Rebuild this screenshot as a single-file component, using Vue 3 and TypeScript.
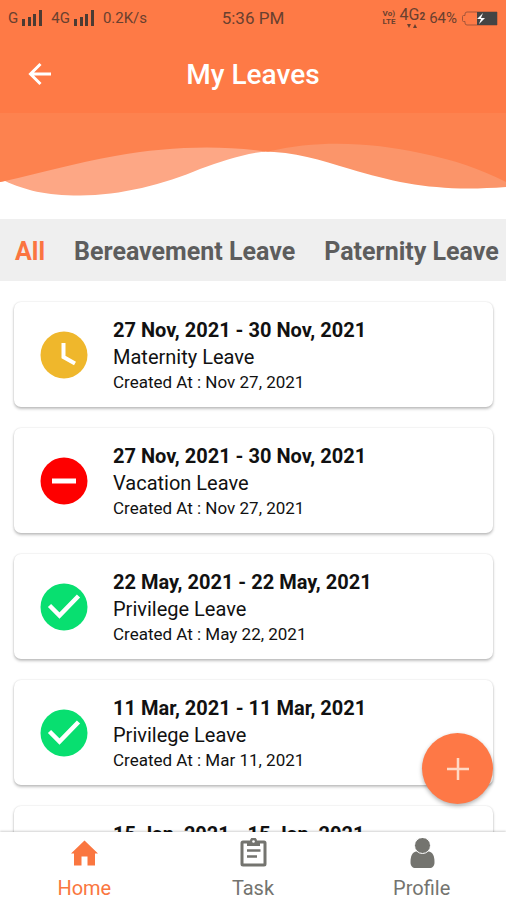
<script setup lang="ts">
import { ref } from 'vue'

type Status = 'pending' | 'rejected' | 'approved'

interface Leave {
  id: number
  range: string
  kind: string
  created: string
  status: Status
}

const filters = ['All', 'Bereavement Leave', 'Paternity Leave']
const activeFilter = ref('All')

const leaves: Leave[] = [
  { id: 1, range: '27 Nov, 2021 - 30 Nov, 2021', kind: 'Maternity Leave', created: 'Nov 27, 2021', status: 'pending' },
  { id: 2, range: '27 Nov, 2021 - 30 Nov, 2021', kind: 'Vacation Leave', created: 'Nov 27, 2021', status: 'rejected' },
  { id: 3, range: '22 May, 2021 - 22 May, 2021', kind: 'Privilege Leave', created: 'May 22, 2021', status: 'approved' },
  { id: 4, range: '11 Mar, 2021 - 11 Mar, 2021', kind: 'Privilege Leave', created: 'Mar 11, 2021', status: 'approved' },
  { id: 5, range: '15 Jan, 2021 - 15 Jan, 2021', kind: 'Privilege Leave', created: 'Jan 15, 2021', status: 'approved' },
]
</script>

<template>
  <div class="screen">
    <header class="header">
      <div class="status">
        <div class="status-group status-left">
          <span class="signal">
            <span class="net">G</span>
            <svg class="bars" viewBox="0 0 21 17" aria-hidden="true">
              <path d="M0 9h3v7H0zM6 7h3v9H6zM11 4h3v12h-3zM17 0h3v16h-3z" />
            </svg>
          </span>
          <span class="signal">
            <span class="net">4G</span>
            <svg class="bars" viewBox="0 0 21 17" aria-hidden="true">
              <path d="M0 9h3v7H0zM6 7h3v9H6zM11 4h3v12h-3zM17 0h3v16h-3z" />
            </svg>
          </span>
          <span class="net">0.2K/s</span>
        </div>
        <time class="clock">5:36 PM</time>
        <div class="status-group status-right">
          <span class="volte"><span>Vo)</span><span>LTE</span></span>
          <span class="mobile">
            <span class="mobile-label">4G<small>2</small></span>
            <svg class="traffic" viewBox="0 0 12 4" aria-hidden="true">
              <path d="M1 0h4L3 4zM7 4h4L9 0z" />
            </svg>
          </span>
          <span class="net">64%</span>
          <svg class="battery" viewBox="0 0 37 15" aria-hidden="true">
            <path d="M6 1h30v13H6q-2 0-2-2v-1.500H2.500q-1 0-1-1v-4q0-1 1-1H4V3q0-2 2-2z" fill="none" stroke="#a5563a" />
            <path d="M16 1h20v13H16z" fill="#444" />
            <path d="M22 2l-6 6h4l-2 5 6-6h-4z" fill="#fff" />
          </svg>
        </div>
      </div>
      <div class="titlebar">
        <button class="back" type="button" aria-label="Back">
          <svg viewBox="0 0 26 26" aria-hidden="true">
            <path d="M24 12H4M13.500 2L3.500 12l10 10" fill="none" stroke="#fff" stroke-width="3" />
          </svg>
        </button>
        <h1>My Leaves</h1>
      </div>
    </header>

    <svg class="wave" viewBox="0 0 506 106" preserveAspectRatio="none" aria-hidden="true">
      <path fill="#fda785" d="M0 0H265V38.500C243 41 222 48 200 56C165 71 120 82.500 80 82.500C45 82.500 25 77 5 68L0 69Z" />
      <path fill="#fb956a" d="M255 0H506V74C440 79 400 71 350 56C320 47 295 38.500 262 38.500Z" />
      <path fill="#fd824f" d="M0 0H506V69C480 56 455 47 420 40C375 30 320 26 268 38.500L262 38C215 32 165 34 115 43C75 50 40 60 5 68L0 69Z" />
    </svg>

    <nav class="filters" aria-label="Leave type">
      <button
        v-for="name in filters"
        :key="name"
        type="button"
        class="filter"
        :class="{ active: name === activeFilter }"
        @click="activeFilter = name"
      >{{ name }}</button>
    </nav>

    <main class="list">
      <article v-for="leave in leaves" :key="leave.id" class="card">
        <svg class="badge" viewBox="0 0 48 48" aria-hidden="true">
          <template v-if="leave.status === 'pending'">
            <circle cx="24" cy="24" r="23.500" fill="#efb72c" />
            <path d="M23.500 12v14l11.500 6.500" fill="none" stroke="#fff" stroke-width="4" />
          </template>
          <template v-else-if="leave.status === 'rejected'">
            <circle cx="24" cy="24" r="23.500" fill="#fe0000" />
            <path d="M12 24h24" stroke="#fff" stroke-width="5" />
          </template>
          <template v-else>
            <circle cx="24" cy="24" r="23.500" fill="#08df70" />
            <path d="M9.500 22.500l10 10L38.500 13" fill="none" stroke="#fff" stroke-width="4.500" />
          </template>
        </svg>
        <div class="details">
          <h2>{{ leave.range }}</h2>
          <p class="kind">{{ leave.kind }}</p>
          <p class="created">Created At : {{ leave.created }}</p>
        </div>
      </article>
    </main>

    <button class="add" type="button" aria-label="Add leave">
      <svg viewBox="0 0 22 22" aria-hidden="true">
        <path d="M11 0v22M0 11h22" stroke="#ffd9c5" stroke-width="2.500" />
      </svg>
    </button>

    <nav class="tabs" aria-label="Main">
      <a class="tab current" href="#home" aria-current="page">
        <svg viewBox="0 0 32 32" aria-hidden="true">
          <path d="M16.500 2.500L30 15.500h-3V27.500h-7.500v-9h-6v9H6v-12H3z" fill="currentColor" />
        </svg>
        <span>Home</span>
      </a>
      <a class="tab" href="#task">
        <svg viewBox="0 0 32 32" aria-hidden="true">
          <rect x="5" y="4" width="23" height="23" rx="1" fill="none" stroke="currentColor" stroke-width="3" />
          <path d="M10 3h3a3.500 3.500 0 0 1 7 0h3v5H10z" fill="currentColor" />
          <path d="M10 12.500h13.500M10 18.500h10" stroke="currentColor" stroke-width="2.500" />
          <circle cx="16.500" cy="3.500" r="1.300" fill="#fff" />
        </svg>
        <span>Task</span>
      </a>
      <a class="tab" href="#profile">
        <svg viewBox="0 0 32 32" aria-hidden="true">
          <path d="M10 13.500h13c4 1 5.500 5 5.500 10.500 0 4-2 6-5 6h-14c-3 0-5-2-5-6 0-5.500 1.500-9.500 5.500-10.500z" fill="currentColor" />
          <circle cx="16.500" cy="7.500" r="8" fill="currentColor" stroke="#fff" />
        </svg>
        <span>Profile</span>
      </a>
    </nav>
  </div>
</template>

<style>
html,
body,
#app {
  height: 100%;
}

body {
  margin: 0;
}
</style>

<style scoped>
.screen {
  display: flex;
  flex-direction: column;
  height: 100%;
  position: relative;
  overflow: hidden;
  background: #fff;
  color: #111;
  font-family: Roboto, "Liberation Sans", sans-serif;
}

button {
  border: 0;
  padding: 0;
  background: none;
  font: inherit;
  color: inherit;
  cursor: pointer;
}

h1,
h2,
p {
  margin: 0;
}

svg {
  display: block;
  flex: none;
}

.header {
  flex: none;
  background: #fe7a46;
}

.status {
  display: grid;
  grid-template-columns: 1fr auto 1fr;
  align-items: center;
  height: 36px;
  padding: 0 8px;
  color: #69402f;
}

.status-group {
  display: flex;
  align-items: center;
}

.status-left {
  gap: 8px;
}

.signal {
  display: flex;
  align-items: center;
  gap: 4px;
}

.status-right {
  justify-content: flex-end;
  gap: 4px;
}

.net {
  font-size: 15px;
}

.bars {
  width: 21px;
  height: 17px;
  fill: #4c3b33;
}

.clock {
  font-size: 17px;
}

.volte {
  display: flex;
  flex-direction: column;
  font-size: 8px;
  line-height: 8px;
  font-weight: 700;
}

.mobile {
  display: flex;
  flex-direction: column;
  align-items: center;
}

.mobile-label {
  font-size: 16px;
  line-height: 14px;
}

.mobile-label small {
  font-size: 10px;
  font-weight: 700;
}

.traffic {
  width: 12px;
  height: 4px;
  fill: currentColor;
}

.battery {
  width: 37px;
  height: 15px;
}

.titlebar {
  display: grid;
  grid-template-columns: 48px 1fr 48px;
  align-items: center;
  height: 77px;
  padding: 0 16px;
}

.back {
  display: grid;
  place-items: center;
  height: 48px;
}

.back svg {
  width: 26px;
  height: 26px;
}

h1 {
  color: #fff;
  font-size: 28px;
  font-weight: 500;
  line-height: 32px;
  text-align: center;
}

.wave {
  width: 100%;
  height: 106px;
}

.filters {
  display: flex;
  flex: none;
  align-items: center;
  gap: 29px;
  height: 62px;
  padding: 3px 0 0 15px;
  box-sizing: border-box;
  overflow: hidden;
  background: #efefef;
}

.filter {
  flex: none;
  color: #5d5d5d;
  font-size: 25px;
  font-weight: 700;
  line-height: 32px;
  white-space: nowrap;
}

.filter.active {
  color: #fb7541;
}

.list {
  display: flex;
  flex: 1;
  flex-direction: column;
  gap: 21px;
  min-height: 0;
  padding: 21px 13px 21px 14px;
  overflow-y: auto;
  scrollbar-width: none;
}

.card {
  display: flex;
  flex: none;
  align-items: center;
  gap: 25px;
  height: 105px;
  padding: 0 26px;
  border-radius: 7px;
  background: #fff;
  box-shadow: 0 2px 3px rgba(0, 0, 0, 0.24), 0 0 2px rgba(0, 0, 0, 0.14);
}

.badge {
  width: 48px;
  height: 48px;
}

h2 {
  font-size: 20px;
  font-weight: 700;
  line-height: 28px;
}

.kind {
  font-size: 20px;
  line-height: 26px;
}

.created {
  font-size: 17px;
  line-height: 24px;
}

.add {
  display: grid;
  place-items: center;
  position: absolute;
  right: 13px;
  bottom: 96px;
  width: 71px;
  height: 71px;
  border-radius: 50%;
  background: #fe7846;
  box-shadow: 0 2px 4px rgba(0, 0, 0, 0.3);
}

.add svg {
  width: 22px;
  height: 22px;
}

.tabs {
  display: grid;
  flex: none;
  grid-template-columns: repeat(3, 1fr);
  position: relative;
  height: 68px;
  background: #fff;
  box-shadow: 0 -1px 2px rgba(0, 0, 0, 0.18);
}

.tab {
  display: flex;
  flex-direction: column;
  align-items: center;
  gap: 6px;
  padding-top: 6px;
  color: #74746f;
  font-size: 20px;
  line-height: 24px;
  text-decoration: none;
}

.tab svg {
  width: 32px;
  height: 32px;
}

.tab.current {
  color: #fa7640;
}
</style>
